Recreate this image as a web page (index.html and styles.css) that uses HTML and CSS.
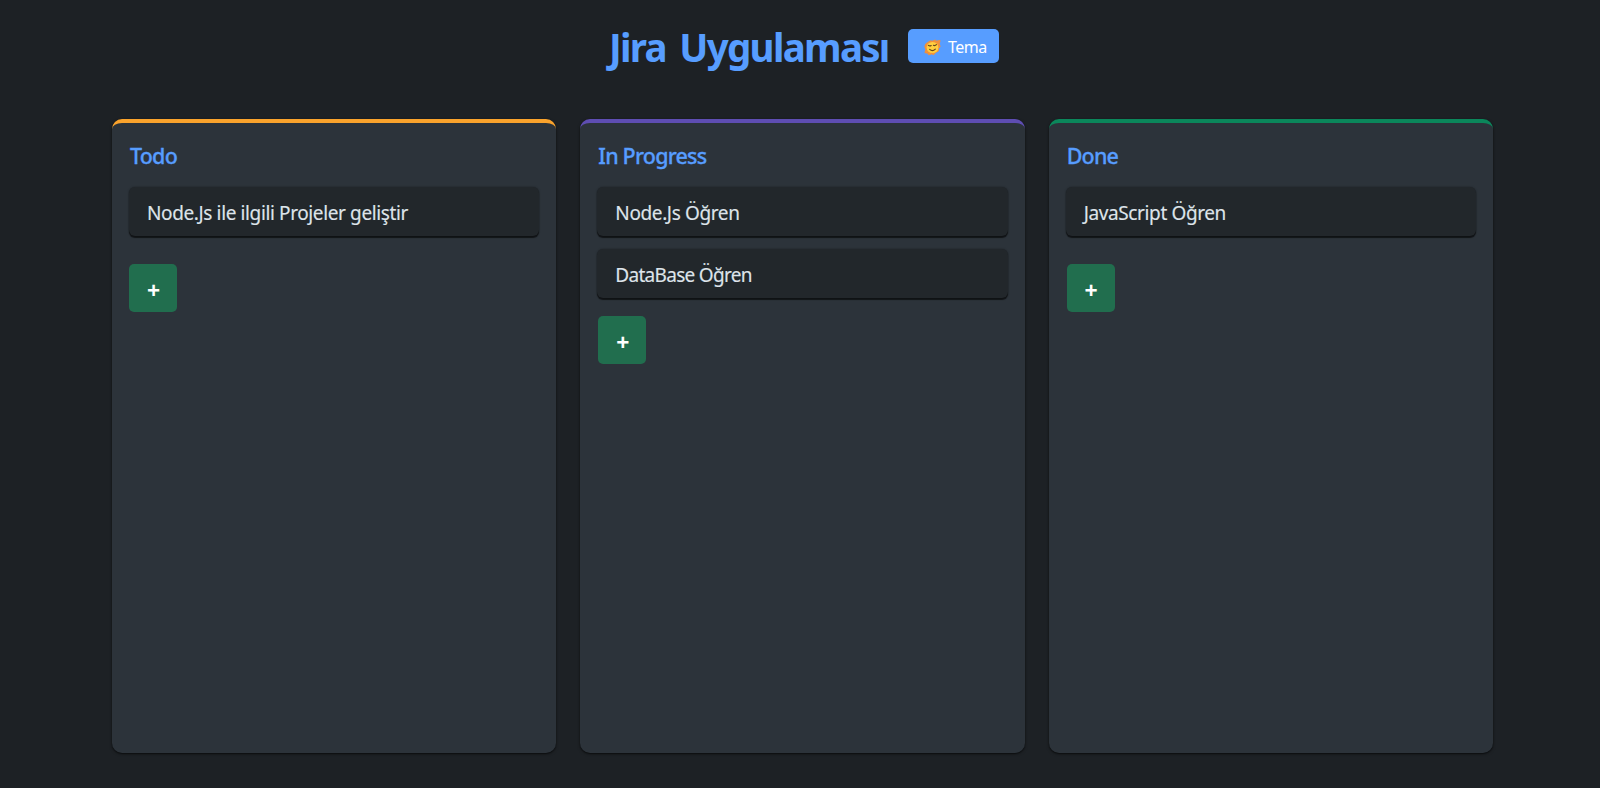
FILE: index.html
```html
<!DOCTYPE html>
<html lang="tr">
<head>
<meta charset="utf-8">
<title>Jira Uygulaması</title>
<link rel="stylesheet" href="styles.css">
</head>
<body>
<header class="header">
  <h1 class="title">Jira Uygulaması</h1>
  <button class="theme">
    <svg class="face" viewBox="0 0 18 18" aria-hidden="true">
      <path d="M2 5 4.5 3.5 6 2 9 2.2 12 1.2 13.5 2.2 17 1.5 16.2 5 17 8 15.5 10 15 13 12.5 14 10.5 16.5 8 15.8 5 16.8 4 15 1 14.5 2 11 .8 8Z" fill="#f2913c" stroke="#f2913c" stroke-linejoin="round"/>
      <ellipse cx="9" cy="9" rx="6.2" ry="5.9" fill="#ffcf3f"/>
      <path d="M4.6 6.7q1.5 1.2 3 .2M10 6.6q1.5 1 3.2-.6M6 11q3 2.7 6-.3" fill="none" stroke="#66431d" stroke-width="1.2" stroke-linecap="round"/>
    </svg>
    <span class="theme-label">Tema</span>
  </button>
</header>
<main class="board">
  <section class="column todo">
    <h2 class="heading">Todo</h2>
    <div class="cards">
      <div class="card">Node.Js ile ilgili Projeler geliştir</div>
    </div>
    <button class="add">+</button>
  </section>
  <section class="column progress">
    <h2 class="heading">In Progress</h2>
    <div class="cards">
      <div class="card">Node.Js Öğren</div>
      <div class="card tight">DataBase Öğren</div>
    </div>
    <button class="add">+</button>
  </section>
  <section class="column done">
    <h2 class="heading">Done</h2>
    <div class="cards">
      <div class="card">JavaScript Öğren</div>
    </div>
    <button class="add">+</button>
  </section>
</main>
</body>
</html>
```
FILE: styles.css
```css
* { box-sizing: border-box; }
body {
  margin: 0;
  height: 788px;
  overflow: hidden;
  background: #1d2125;
  color: #dee4ea;
  font-family: "Segoe UI", "Noto Sans", "Open Sans", sans-serif;
}
.header {
  display: flex;
  align-items: flex-start;
  height: 119px;
  padding: 20px 0 0 609px;
}
.title {
  margin: 0;
  width: 299px;
  font-size: 38.5px;
  line-height: 55px;
  font-weight: 700;
  letter-spacing: -1.7px;
  word-spacing: 5px;
  color: #579dff;
  white-space: nowrap;
}
.theme {
  display: flex;
  align-items: center;
  width: 91px;
  height: 34px;
  margin-top: 9px;
  padding: 0 0 0 16px;
  border: 0;
  border-radius: 5px;
  background: #579dff;
  color: #fff;
  font: 16px/34px "Segoe UI", "Noto Sans", sans-serif;
}
.face { width: 17px; height: 17px; margin: 2px 7px 0 0; }
.theme-label { letter-spacing: -0.5px; padding-top: 2px; }
.board {
  display: grid;
  grid-template-columns: repeat(3, 1fr);
  gap: 24px;
  width: 1381px;
  height: 634px;
  margin-left: 112px;
}
.column {
  padding: 20px 17px;
  border-top: 4px solid;
  border-radius: 10px;
  background: #2c333a;
  box-shadow: 0 1px 3px rgba(0, 0, 0, .5), 0 1px 1px rgba(0, 0, 0, .3);
}
.todo { border-color: #faa32c; }
.progress { border-color: #5e4db2; }
.done { border-color: #0b875b; }
.heading {
  margin: 0 0 18px 1px;
  font-size: 21.5px;
  line-height: 26px;
  font-weight: 500;
  letter-spacing: -.8px;
  color: #579dff;
  -webkit-text-stroke: .3px #579dff;
}
.cards {
  display: flex;
  flex-direction: column;
  gap: 13px;
  min-height: 77px;
}
.progress .cards { min-height: 129px; }
.card {
  height: 49px;
  padding-left: 18px;
  border-radius: 6px;
  background: #22272b;
  box-shadow: 0 2px 1px rgba(0, 0, 0, .6), 0 0 2px rgba(0, 0, 0, .4);
  font-size: 19px;
  line-height: 52px;
  white-space: nowrap;
  letter-spacing: -.38px;
  -webkit-text-stroke: .15px #dee4ea;
}
.tight { letter-spacing: -.7px; }
.add {
  display: block;
  width: 48px;
  height: 48px;
  padding: 5px 0 0 1px;
  border: 0;
  border-radius: 5px;
  background: #216e4e;
  color: #fff;
  font: 700 23px/43px "Segoe UI", "Noto Sans", sans-serif;
}
.progress .add,
.done .add { margin-left: 1px; }
```
